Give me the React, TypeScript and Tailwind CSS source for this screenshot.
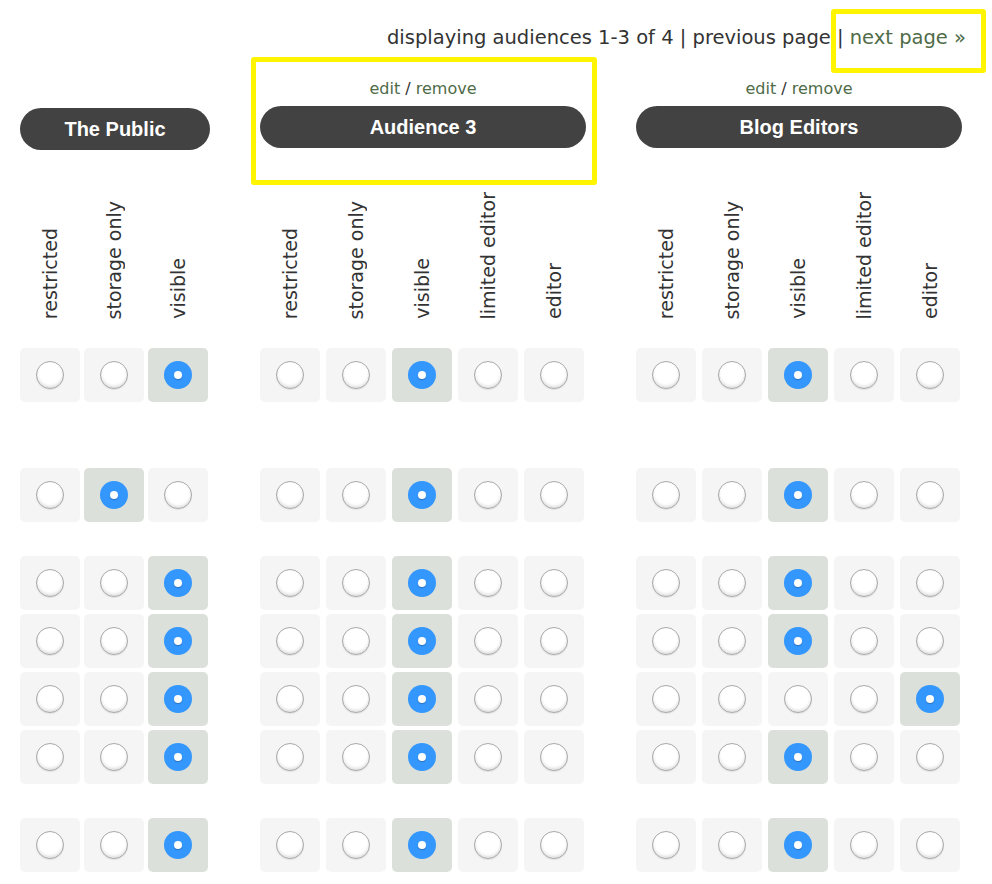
import React from 'react';

type Audience = {
  name: string;
  levels: string[];
  editable: boolean;
  highlight?: boolean;
  width: string;
  gap: string;
  cols: string;
  // index of checked level, per row
  rows: number[];
};

const FIVE = ['restricted', 'storage only', 'visible', 'limited editor', 'editor'];

const audiences: Audience[] = [
  {
    name: 'The Public',
    levels: ['restricted', 'storage only', 'visible'],
    editable: false,
    width: 'w-[190px]',
    gap: 'gap-x-[4px]',
    cols: 'grid-cols-[60px_60px_60px]',
    rows: [2, 1, 2, 2, 2, 2, 2],
  },
  {
    name: 'Audience 3',
    levels: FIVE,
    editable: true,
    highlight: true,
    width: 'w-[326px]',
    gap: 'gap-x-[6px]',
    cols: 'grid-cols-[60px_60px_60px_60px_60px]',
    rows: [2, 2, 2, 2, 2, 2, 2],
  },
  {
    name: 'Blog Editors',
    levels: FIVE,
    editable: true,
    width: 'w-[326px]',
    gap: 'gap-x-[6px]',
    cols: 'grid-cols-[60px_60px_60px_60px_60px]',
    rows: [2, 2, 2, 2, 4, 2, 2],
  },
];

// space above each row
const rowGaps = ['mt-0', 'mt-[66px]', 'mt-[34px]', 'mt-[4px]', 'mt-[4px]', 'mt-[4px]', 'mt-[34px]'];

const Radio: React.FC<{ checked: boolean }> = ({ checked }) =>
  checked ? (
    <span className="flex h-[28px] w-[28px] items-center justify-center rounded-full bg-[#3497fd]">
      <span className="h-[8px] w-[8px] rounded-full bg-white shadow-[0_1px_1px_rgba(0,0,0,0.25)]" />
    </span>
  ) : (
    <span className="block h-[28px] w-[28px] rounded-full border border-[#a9a9a9] bg-white shadow-[inset_0_-2px_3px_rgba(0,0,0,0.12),0_1px_1px_rgba(0,0,0,0.08)]" />
  );

const Column: React.FC<{ a: Audience }> = ({ a }) => (
  <div className={`relative flex shrink-0 flex-col ${a.width}`}>
    {a.highlight && (
      <div className="pointer-events-none absolute left-[-9px] right-[-11px] top-[-19px] h-[128px] rounded-[3px] border-[5px] border-[#fff500]" />
    )}
    <div className="flex h-[30px] items-center justify-center pb-[5px] text-[16px] text-[#333]">
      {a.editable && (
        <span>
          <a className="text-[#4f6b48]">edit</a> / <a className="text-[#4f6b48]">remove</a>
        </span>
      )}
    </div>
    <div
      className={`flex h-[42px] items-center justify-center rounded-full bg-[#424242] text-[20px] font-bold text-white [font-family:'Liberation_Sans',Arial,sans-serif] ${
        a.editable ? '' : 'mt-[2px] mb-[-2px]'
      }`}
    >
      {a.name}
    </div>
    <div className={`grid h-[200px] items-end pb-[29px] ${a.cols} ${a.gap}`}>
      {a.levels.map((l) => (
        <div key={l} className="flex justify-center">
          <span className="rotate-180 text-[19px] leading-[20px] text-[#333] [writing-mode:vertical-rl]">{l}</span>
        </div>
      ))}
    </div>
    {a.rows.map((sel, r) => (
      <div key={r} className={`grid ${a.cols} ${a.gap} ${rowGaps[r]}`}>
        {a.levels.map((l, i) => (
          <div
            key={l}
            className={`flex h-[54px] items-center justify-center rounded-[5px] ${
              i === sel ? 'bg-[#dce0da]' : 'bg-[#f5f5f5]'
            }`}
          >
            <Radio checked={i === sel} />
          </div>
        ))}
      </div>
    ))}
  </div>
);

export default function App() {
  return (
    <div className="min-h-[884px] bg-white [font-family:'DejaVu_Sans',Verdana,sans-serif]">
      <div className="flex h-[76px] items-center justify-end pr-[26px] text-[19.5px] leading-[24px] text-[#333]">
        <span>displaying audiences 1-3 of 4 | previous page |&nbsp;</span>
        <a className="relative text-[#4f6b48]">
          next page »
          <span className="pointer-events-none absolute bottom-[-23px] left-[-19px] right-[-20px] top-[-17px] rounded-[3px] border-[5px] border-[#fff500]" />
        </a>
      </div>
      <div className="flex gap-[50px] pl-[20px]">
        {audiences.map((a) => (
          <Column key={a.name} a={a} />
        ))}
      </div>
    </div>
  );
}
